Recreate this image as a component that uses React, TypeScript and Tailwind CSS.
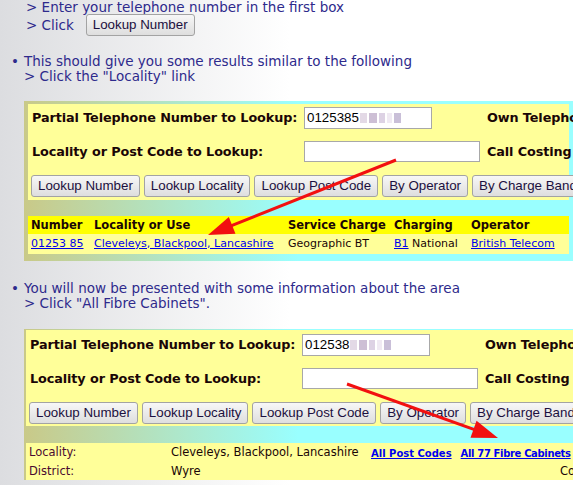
import type { ReactNode } from "react";

const verdana = "font-['DejaVu_Sans',Verdana,sans-serif]";
const arial = "font-['Liberation_Sans',Arial,sans-serif]";
const label = `${verdana} shrink-0 whitespace-nowrap text-[12.8px] font-bold tracking-[-0.1px] text-[#1a0606]`;

function Btn({ children }: { children: ReactNode }) {
  return (
    <button className={`${arial} h-[22px] shrink-0 whitespace-nowrap rounded-[3px] border border-[#a3a3a3] bg-[linear-gradient(#f7f7f7,#dedede)] px-[6px] text-[13.33px] leading-none text-[#1c1040]`}>
      {children}
    </button>
  );
}

function Blurred({ digits }: { digits: string }) {
  return (
    <div className={`${arial} flex items-center text-[13.33px] text-black`}>
      <span>{digits}</span>
      <span className="ml-[1px] flex items-center gap-[2px] blur-[0.6px]">
        <span className="h-[10px] w-[7px] bg-[#e3d9e6]" />
        <span className="h-[10px] w-[8px] bg-[#cdbfd5]" />
        <span className="h-[10px] w-[6px] bg-[#ddd2e4]" />
        <span className="h-[10px] w-[5px] bg-[#f0eaf3]" />
        <span className="h-[10px] w-[7px] bg-[#c9bfd8]" />
      </span>
    </div>
  );
}

function LookupForm({ number, compact }: { number: string; compact?: boolean }) {
  return (
    <div className={`bg-[#ffff99] pl-[4px] ${compact ? "pt-[4px] pb-[2px]" : "pt-[3px] pb-[3px]"}`}>
      <div className="flex h-[22px] items-center">
        <div className={`${label} w-[272px]`}>Partial Telephone Number to Lookup:</div>
        <div className="w-[183px] shrink-0">
          <div className="flex h-[22px] w-[128px] items-center border border-[#a8a8a8] bg-white px-[2px]">
            <Blurred digits={number} />
          </div>
        </div>
        <div className={label}>Own Telephone Number:</div>
      </div>
      <div className="mt-[12px] flex h-[21px] items-center">
        <div className={`${label} w-[272px]`}>Locality or Post Code to Lookup:</div>
        <div className="w-[183px] shrink-0">
          <div className="h-[21px] w-[176px] border border-[#a8a8a8] bg-white" />
        </div>
        <div className={label}>Call Costing</div>
      </div>
      <div className="-ml-[1px] mt-[13px] flex gap-[4px]">
        <Btn>Lookup Number</Btn>
        <Btn>Lookup Locality</Btn>
        <Btn>Lookup Post Code</Btn>
        <Btn>By Operator</Btn>
        <Btn>By Charge Band</Btn>
      </div>
    </div>
  );
}

const lnk = "text-[#0000ee] underline";

function Arrow({ x1, y1, x2, y2 }: { x1: number; y1: number; x2: number; y2: number }) {
  const len = Math.hypot(x2 - x1, y2 - y1);
  const ux = (x2 - x1) / len;
  const uy = (y2 - y1) / len;
  const hl = 26;
  const hw = 9;
  const bx = x2 - ux * hl;
  const by = y2 - uy * hl;
  const pts = `${x2},${y2} ${bx - uy * hw},${by + ux * hw} ${bx + uy * hw},${by - ux * hw}`;
  return (
    <g>
      <line x1={x1} y1={y1} x2={bx + ux * 4} y2={by + uy * 4} stroke="#f21010" strokeWidth={3} />
      <polygon points={pts} fill="#f21010" />
    </g>
  );
}

export default function App() {
  return (
    <div className={`${verdana} relative min-h-screen overflow-hidden bg-[linear-gradient(to_right,#dcdde0,#ffffff_50%)] text-[13.5px] text-[#2e2a8c]`}>
      <div className="pl-[26px] leading-[14px]">&gt; Enter your telephone number in the first box</div>
      <div className="flex h-[22px] items-center pl-[26px]">
        <span>&gt; Click</span>
        <span className="ml-[12px]">
          <Btn>Lookup Number</Btn>
        </span>
      </div>

      <div className="mt-[18px] flex leading-[15px]">
        <span className="w-[24px] pl-[11px]">•</span>
        <div>
          <div>This should give you some results similar to the following</div>
          <div>&gt; Click the "Locality" link</div>
        </div>
      </div>

      {/* first lookup panel with results table */}
      <div className="ml-[24px] mt-[17px] w-[549px] overflow-hidden bg-[linear-gradient(to_right,#c9c988,#99ffff_50%)] px-[4px] pt-[3px] pb-[7px]">
        <LookupForm number="0125385" />
        <div className="mt-[16px] grid grid-cols-[63px_194px_106px_77px_1fr] whitespace-nowrap bg-[#ffff00] pl-[3px] text-[11.5px] font-bold leading-[18px] text-[#1a0606]">
          <span>Number</span>
          <span>Locality or Use</span>
          <span>Service Charge</span>
          <span>Charging</span>
          <span>Operator</span>
        </div>
        <div className="grid h-[20px] grid-cols-[63px_194px_106px_77px_1fr] items-center whitespace-nowrap bg-[#ffff99] pl-[3px] text-[11px] text-[#1a0606]">
          <a className={lnk}>01253 85</a>
          <a className={lnk}>Cleveleys, Blackpool, Lancashire</a>
          <span>Geographic BT</span>
          <span>
            <a className={lnk}>B1</a> National
          </span>
          <a className={lnk}>British Telecom</a>
        </div>
      </div>

      <div className="mt-[20px] flex leading-[15px]">
        <span className="w-[24px] pl-[11px]">•</span>
        <div>
          <div>You will now be presented with some information about the area</div>
          <div>&gt; Click "All Fibre Cabinets".</div>
        </div>
      </div>

      {/* second lookup panel with area details */}
      <div className="ml-[24px] mt-[18px] w-[549px] overflow-hidden bg-[linear-gradient(to_right,#c9c988,#99ffff_50%)] pl-[2px] pt-[1px]">
        <LookupForm number="012538" compact />
        <div className="mt-[17px] whitespace-nowrap bg-[#ffff99] pl-[3px] text-[11.5px]">
          <div className="flex h-[20px] items-center">
            <span className="w-[142px] shrink-0 text-[#4a0a30]">Locality:</span>
            <span className="w-[200px] shrink-0 text-[#1a0606]">Cleveleys, Blackpool, Lancashire</span>
            <a className={`${lnk} text-[10px] font-bold`}>All Post Codes</a>
            <a className={`${lnk} ml-[9px] text-[10px] font-bold tracking-[-0.35px]`}>All 77 Fibre Cabinets</a>
          </div>
          <div className="flex h-[17px] items-center">
            <span className="w-[142px] shrink-0 text-[#4a0a30]">District:</span>
            <span className="w-[389px] shrink-0 text-[#1a0606]">Wyre</span>
            <span className="text-[#1a0606]">County:</span>
          </div>
        </div>
      </div>

      <svg className="pointer-events-none absolute inset-0" width="580" height="485">
        <Arrow x1={396} y1={160} x2={208} y2={235} />
        <Arrow x1={347} y1={384} x2={498} y2={438} />
      </svg>
    </div>
  );
}
